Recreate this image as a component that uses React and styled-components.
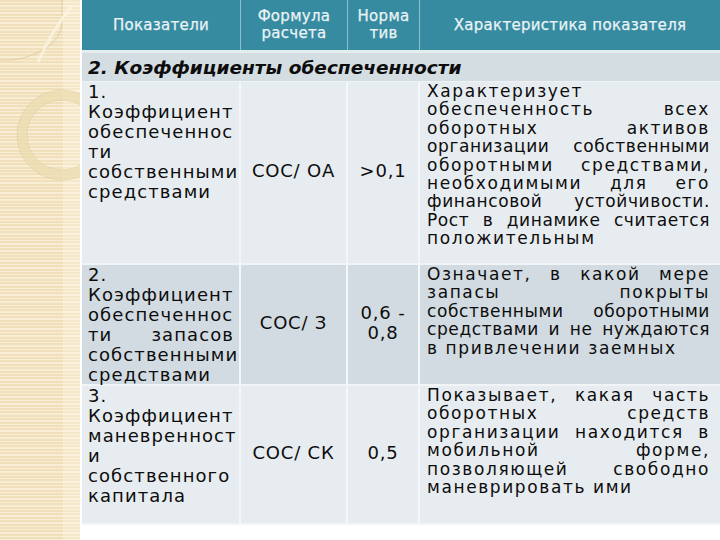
import styled, { createGlobalStyle } from 'styled-components'

const GlobalStyle = createGlobalStyle`
  html, body {
    margin: 0;
    padding: 0;
    background: #ffffff;
  }
  body {
    font-family: "DejaVu Sans", "Liberation Sans", sans-serif;
    color: #111;
  }
`

const rows = [
  {
    tone: 'light',
    name: [
      { t: '1.' },
      { t: 'Коэффициент' },
      { t: 'обеспеченнос' },
      { t: 'ти' },
      { t: 'собственными' },
      { t: 'средствами' },
    ],
    formula: 'СОС/ ОА',
    norm: ['>0,1'],
    about: [
      { t: 'Характеризует' },
      { t: 'обеспеченность всех', j: true },
      { t: 'оборотных активов', j: true },
      { t: 'организации собственными', j: true, tight: true },
      { t: 'оборотными средствами,', j: true },
      { t: 'необходимыми для его', j: true },
      { t: 'финансовой устойчивости.', j: true, tight: true },
      { t: 'Рост в динамике считается', j: true, tight: true },
      { t: 'положительным' },
    ],
  },
  {
    tone: 'dark',
    name: [
      { t: '2.' },
      { t: 'Коэффициент' },
      { t: 'обеспеченнос' },
      { t: 'ти запасов', j: true },
      { t: 'собственными' },
      { t: 'средствами' },
    ],
    formula: 'СОС/ З',
    norm: ['0,6 -', '0,8'],
    about: [
      { t: 'Означает, в какой мере', j: true },
      { t: 'запасы покрыты', j: true },
      { t: 'собственными оборотными', j: true, tight: true },
      { t: 'средствами и не нуждаются', j: true, tight: true },
      { t: 'в привлечении заемных' },
    ],
  },
  {
    tone: 'light',
    name: [
      { t: '3.' },
      { t: 'Коэффициент' },
      { t: 'маневренност' },
      { t: 'и' },
      { t: 'собственного' },
      { t: 'капитала' },
    ],
    formula: 'СОС/ СК',
    norm: ['0,5'],
    about: [
      { t: 'Показывает, какая часть', j: true },
      { t: 'оборотных средств', j: true },
      { t: 'организации находится в', j: true },
      { t: 'мобильной форме,', j: true },
      { t: 'позволяющей свободно', j: true },
      { t: 'маневрировать ими' },
    ],
  },
]

const Page = styled.div`
  display: flex;
  width: 720px;
  height: 540px;
  overflow: hidden;
  background: #fff;
`

const Strip = styled.div`
  position: relative;
  flex: none;
  width: 80px;
  height: 100%;
  background:
    linear-gradient(90deg, transparent 0 63px, rgba(255, 250, 235, 0.35) 63px 80px),
    repeating-linear-gradient(
      180deg,
      #f0dfb8 0px,
      #f0dfb8 2px,
      #f8eed6 2px,
      #f8eed6 3.4px
    );
`

const Ornament = styled.svg`
  position: absolute;
  inset: 0;
  width: 80px;
  height: 540px;
`

const Table = styled.div`
  flex: 1;
  margin-left: 2px;
  display: grid;
  grid-template-columns: 159px 107px 72px 1fr;
  grid-template-rows: 50px 3px 29px 183px 121px 139px;
  align-content: start;
`

const HeadCell = styled.div`
  display: flex;
  align-items: center;
  justify-content: center;
  text-align: center;
  background: #378ba1;
  color: #eaf3f5;
  font-size: 15px;
  line-height: 17px;
  letter-spacing: 0.3px;
  -webkit-text-stroke: 0.25px #eaf3f5;
  border-right: ${({ $last }) => ($last ? 'none' : '1px solid #8dbfcc')};
`

const Divider = styled.div`
  grid-column: 1 / -1;
  background: #e3eeec;
`

const Section = styled.div`
  grid-column: 1 / -1;
  display: flex;
  align-items: center;
  padding-left: 6px;
  background: #d4dde2;
  font-size: 18.5px;
  font-weight: bold;
  font-style: italic;
  color: #0d0d0d;
  border-bottom: 1px solid #eef3f5;
`

const Cell = styled.div`
  position: relative;
  background: ${({ $tone }) => ($tone === 'dark' ? '#d2dbe1' : '#e7ecf0')};
  border-right: ${({ $last }) => ($last ? 'none' : '2px solid #f4f7f9')};
  border-bottom: 2px solid #f1f5f7;
  color: #0d0d0d;
  white-space: nowrap;
`

const NameCell = styled(Cell)`
  padding: 0 5px 0 6px;
  font-size: 18px;
  line-height: 20px;
  letter-spacing: 1.1px;
`

const CenterCell = styled(Cell)`
  display: flex;
  flex-direction: column;
  align-items: center;
  justify-content: center;
  font-size: 18px;
  line-height: 20px;
  padding-bottom: 4px;
  letter-spacing: 0.8px;
`

const AboutCell = styled(Cell)`
  padding: 0 10px 0 7px;
  font-size: 17px;
  line-height: 18.4px;
  letter-spacing: 1.6px;
`

const Line = styled.div`
  text-align: ${({ $j }) => ($j ? 'justify' : 'left')};
  text-align-last: ${({ $j }) => ($j ? 'justify' : 'left')};
  letter-spacing: ${({ $tight }) => ($tight ? '0.6px' : 'inherit')};
  word-spacing: ${({ $tight }) => ($tight ? '-0.2em' : 'normal')};
`

const Lines = ({ items }) =>
  items.map((l, i) => (
    <Line key={i} $j={l.j} $tight={l.tight}>
      {l.t}
    </Line>
  ))

const App = () => (
  <>
    <GlobalStyle />
    <Page>
      <Strip>
        <Ornament viewBox="0 0 80 540">
          <path d="M62 0 V22 Q62 38 46 48 Q30 58 12 60 H0" fill="none" stroke="#d9c79c" strokeWidth="1" opacity="0.7" />
          <path d="M38 62 Q52 30 72 6" fill="none" stroke="#fbf4e2" strokeWidth="3" opacity="0.8" />
          <circle cx="62" cy="135" r="40" fill="none" stroke="#ecdcb2" strokeWidth="9" opacity="0.8" />
          <circle cx="62" cy="135" r="45" fill="none" stroke="#dccb9f" strokeWidth="1" opacity="0.6" />
          <circle cx="62" cy="135" r="35" fill="none" stroke="#dccb9f" strokeWidth="1" opacity="0.6" />
        </Ornament>
      </Strip>
      <Table>
        <HeadCell>Показатели</HeadCell>
        <HeadCell>Формула<br />расчета</HeadCell>
        <HeadCell>Норма<br />тив</HeadCell>
        <HeadCell $last>Характеристика показателя</HeadCell>
        <Divider />
        <Section>2. Коэффициенты обеспеченности</Section>
        {rows.map((r, i) => [
          <NameCell key={`n${i}`} $tone={r.tone}>
            <Lines items={r.name} />
          </NameCell>,
          <CenterCell key={`f${i}`} $tone={r.tone}>
            {r.formula}
          </CenterCell>,
          <CenterCell key={`v${i}`} $tone={r.tone}>
            {r.norm.map((n) => (
              <div key={n}>{n}</div>
            ))}
          </CenterCell>,
          <AboutCell key={`a${i}`} $tone={r.tone} $last>
            <Lines items={r.about} />
          </AboutCell>,
        ])}
      </Table>
    </Page>
  </>
)

export default App
